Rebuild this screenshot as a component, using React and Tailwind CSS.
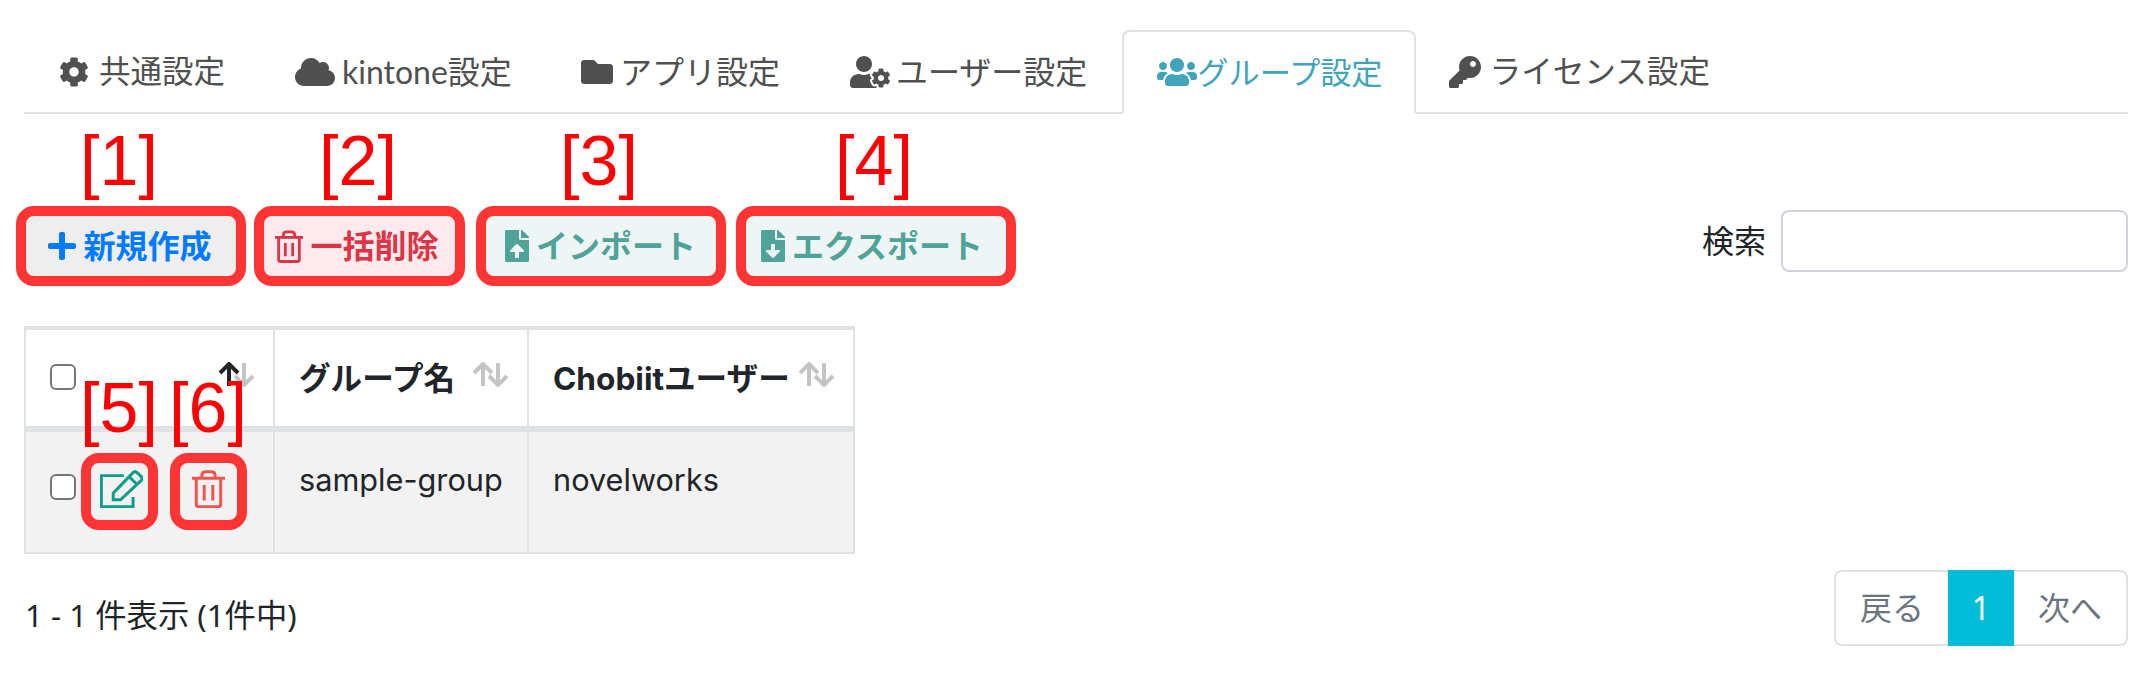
import React from "react";
import { FaCog, FaCloud, FaFolder, FaUserCog, FaUsers, FaKey, FaPlus, FaFileUpload, FaFileDownload } from "react-icons/fa";

const tabFont = "font-['Lato','Noto_Sans_CJK_JP',sans-serif]";
const jp = "font-['Noto_Sans','Noto_Sans_CJK_JP',sans-serif]";
const inter = "font-['Inter','Noto_Sans_CJK_JP',sans-serif]";

const tabs = [
  { label: "共通設定", Icon: FaCog, size: "text-[30px]", tab: "gap-[10px] px-[35px] text-[31.5px]" },
  { label: "kintone設定", Icon: FaCloud, size: "text-[40px]", tab: "gap-[7px] pl-[35px] pr-[34px] text-[32px]" },
  { label: "アプリ設定", Icon: FaFolder, size: "text-[32px]", tab: "gap-[7px] px-[35px] text-[32px]" },
  { label: "ユーザー設定", Icon: FaUserCog, size: "text-[40px]", tab: "gap-[6px] px-[35px] text-[32px]" },
  { label: "グループ設定", Icon: FaUsers, size: "text-[40px]", tab: "gap-0 pl-[33px] pr-[31px] text-[31.2px]", active: true },
  { label: "ライセンス設定", Icon: FaKey, size: "text-[32px]", tab: "gap-[9px] pl-[33px] pr-[35px] text-[31.6px]" },
];

const TrashIcon = ({ className, width = "9" }) => (
  <svg viewBox="0 0 100 115" fill="none" stroke="currentColor" strokeWidth={width} className={className}>
    <path d="M0 25H100" />
    <path d="M30 25V15Q30 5 42 5H58Q70 5 70 15V25" />
    <path d="M13 25V105Q13 111 20 111H80Q87 111 87 105V25" />
    <path d="M37 45V92M63 45V92" />
  </svg>
);

const EditIcon = () => (
  <svg viewBox="0 0 130 115" fill="none" stroke="currentColor" strokeWidth="9" className="w-[43px] h-[38px] text-[#0f9d8a]">
    <path d="M72 17H4V111H100V82" />
    <path d="M40 90V70L100 8Q106 2 112 8L125 20Q130 26 124 32L62 90Z" />
    <path d="M88 20L112 44" />
  </svg>
);

const SortArrows = ({ up }) => (
  <svg viewBox="0 0 37 25" fill="none" strokeWidth="4" className="absolute right-[18px] top-[32px] w-[37px] h-[25px]">
    <path d="M11 24V3M2 11L11 2L20 11" stroke={up} />
    <path d="M26 1V22M17 14L26 23L35 14" stroke="#c2c4c6" />
  </svg>
);

const Label = ({ className, children }) => (
  <span className={`absolute z-10 text-[70px] leading-none text-[#ff0000] font-['Liberation_Sans',sans-serif] font-normal ${className}`}>
    {children}
  </span>
);

export default function App() {
  return (
    <div className={`w-[2152px] h-[676px] overflow-hidden bg-white px-6 pt-[30px] ${jp}`}>
      <ul className={`flex h-[84px] border-b-2 border-[#dee2e6] ${tabFont}`}>
        {tabs.map(({ label, Icon, size, tab, active }) => (
          <li
            key={label}
            className={`flex h-[84px] items-center rounded-t-lg ${tab} ${
              active
                ? "border-2 border-b-white border-[#dee2e6] text-[#41a4ba] bg-white"
                : "text-[#505050]"
            }`}
          >
            <Icon className={size} />
            <span>{label}</span>
          </li>
        ))}
      </ul>

      <div className="flex items-start justify-between mt-[102px] pl-[2px]">
        <div className="flex">
          <button className="relative flex items-center justify-center gap-[5px] w-[210px] h-[60px] mr-[28px] pr-[4px] rounded-lg bg-[#eeeeee] outline-[10px] outline-[#ff3535] text-[#007bff] text-[32px] font-bold">
            <Label className="left-[54px] top-[-90px]">[1]</Label>
            <FaPlus className="text-[32px]" />
            <span>新規作成</span>
          </button>
          <button className="relative flex items-center justify-center gap-[7px] w-[191px] h-[60px] mr-[31px] pr-[5px] rounded-lg bg-[#fdeaed] outline-[10px] outline-[#ff3535] text-[#dc3545] text-[32px] font-bold">
            <Label className="left-[55px] top-[-90px]">[2]</Label>
            <TrashIcon className="w-[28px] h-[33px]" width="10" />
            <span>一括削除</span>
          </button>
          <button className="relative flex items-center justify-center gap-[3px] w-[230px] h-[60px] mr-[30px] pr-[5px] rounded-lg bg-[#eef6f5] outline-[10px] outline-[#ff3535] text-[#4fa398] text-[32px] font-bold">
            <Label className="left-[74px] top-[-90px]">[3]</Label>
            <FaFileUpload className="text-[32px]" />
            <span>インポート</span>
          </button>
          <button className="relative flex items-center justify-center gap-[3px] w-[260px] h-[60px] pr-[12px] rounded-lg bg-[#eef6f5] outline-[10px] outline-[#ff3535] text-[#4fa398] text-[32px] font-bold">
            <Label className="left-[89px] top-[-90px]">[4]</Label>
            <FaFileDownload className="text-[32px]" />
            <span>エクスポート</span>
          </button>
        </div>
        <div className="flex items-center gap-[15px] -mt-[6px] text-[32px] text-[#212529]">
          <span>検索</span>
          <input className="w-[347px] h-[62px] rounded-lg border-2 border-[#ced4da] bg-white" />
        </div>
      </div>

      <table className={`mt-[50px] w-[831px] table-fixed border-separate border-spacing-0 text-[30.7px] text-[#212529] ${inter}`}>
        <thead>
          <tr className="h-[106px] text-[31.6px]">
            <th className="relative w-[251px] border-2 border-t-4 border-b-[6px] border-[#dee2e6] bg-white pl-[24px] text-left align-top">
              <input type="checkbox" className="appearance-none block mt-[34px] w-[26px] h-[26px] rounded-md border-2 border-[#767676] bg-white" />
              <SortArrows up="#212529" />
            </th>
            <th className="relative w-[254px] border-t-4 border-b-[6px] border-r-2 border-[#dee2e6] bg-white pl-[24px] pt-[2px] text-left font-bold">
              グループ名
              <SortArrows up="#c2c4c6" />
            </th>
            <th className="relative w-[326px] border-t-4 border-b-[6px] border-r-2 border-[#dee2e6] bg-white pl-[24px] pt-[2px] text-left font-bold">
              Chobiitユーザー
              <SortArrows up="#c2c4c6" />
            </th>
          </tr>
        </thead>
        <tbody>
          <tr className="h-[122px] bg-[#f2f2f2]">
            <td className="border-2 border-t-0 border-[#dee2e6] pl-[24px] pt-[31px] align-top">
              <div className="flex items-start">
                <input type="checkbox" className="appearance-none block mt-[11px] w-[26px] h-[26px] rounded-md border-2 border-[#767676] bg-white" />
                <button className="relative flex items-center justify-center ml-[15px] w-[57px] h-[57px] pb-[5px] pl-[3px] rounded-lg outline-[10px] outline-[#ff3535]">
                  <Label className="left-[-11px] top-[-90px]">[5]</Label>
                  <EditIcon />
                </button>
                <button className="relative flex items-center justify-center ml-[32px] w-[57px] h-[57px] pb-[5px] rounded-lg outline-[10px] outline-[#ff3535] text-[#f0544f]">
                  <Label className="left-[-11px] top-[-90px]">[6]</Label>
                  <TrashIcon className="w-[33px] h-[38px]" />
                </button>
              </div>
            </td>
            <td className="border-b-2 border-r-2 border-[#dee2e6] pl-[24px] pt-[25px] align-top">sample-group</td>
            <td className="border-b-2 border-r-2 border-[#dee2e6] pl-[24px] pt-[25px] align-top">novelworks</td>
          </tr>
        </tbody>
      </table>

      <div className="flex items-center justify-between mt-[16px]">
        <span className="pl-px pt-[14px] text-[31.3px] text-[#212529]">1 - 1 件表示 (1件中)</span>
        <div className="flex h-[76px] text-[32px] text-[#6c757d]">
          <span className="flex items-center justify-center w-[114px] rounded-l-lg border-2 border-r-0 border-[#dee2e6] bg-white">戻る</span>
          <span className="flex items-center justify-center w-[66px] bg-[#00bcd8] text-white">1</span>
          <span className="flex items-center justify-center w-[114px] rounded-r-lg border-2 border-l-0 border-[#dee2e6] bg-white">次へ</span>
        </div>
      </div>
    </div>
  );
}
